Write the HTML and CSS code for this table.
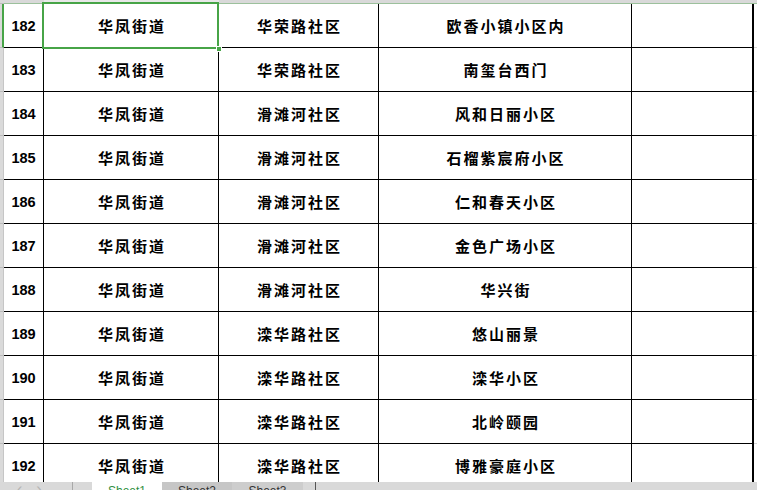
FILE: index.html
```html
<!DOCTYPE html>
<html lang="zh">
<head>
<meta charset="utf-8">
<link rel="stylesheet" href="styles.css">
</head>
<body>
<div class="sheet">
  <div class="colhead">
    <div class="hc corner"></div>
    <div class="hc"></div>
    <div class="hc sel"></div>
    <div class="hc"></div>
    <div class="hc"></div>
    <div class="hc"></div>
    <div class="hc"></div>
  </div>
  <div class="rows">
    <div class="row active"><div class="rh"></div><div class="c num">182</div><div class="c">华凤街道</div><div class="c">华荣路社区</div><div class="c">欧香小镇小区内</div><div class="c e"></div><div class="c f"></div></div>
    <div class="row"><div class="rh"></div><div class="c num">183</div><div class="c">华凤街道</div><div class="c">华荣路社区</div><div class="c">南玺台西门</div><div class="c e"></div><div class="c f"></div></div>
    <div class="row"><div class="rh"></div><div class="c num">184</div><div class="c">华凤街道</div><div class="c">滑滩河社区</div><div class="c">风和日丽小区</div><div class="c e"></div><div class="c f"></div></div>
    <div class="row"><div class="rh"></div><div class="c num">185</div><div class="c">华凤街道</div><div class="c">滑滩河社区</div><div class="c">石榴紫宸府小区</div><div class="c e"></div><div class="c f"></div></div>
    <div class="row"><div class="rh"></div><div class="c num">186</div><div class="c">华凤街道</div><div class="c">滑滩河社区</div><div class="c">仁和春天小区</div><div class="c e"></div><div class="c f"></div></div>
    <div class="row"><div class="rh"></div><div class="c num">187</div><div class="c">华凤街道</div><div class="c">滑滩河社区</div><div class="c">金色广场小区</div><div class="c e"></div><div class="c f"></div></div>
    <div class="row"><div class="rh"></div><div class="c num">188</div><div class="c">华凤街道</div><div class="c">滑滩河社区</div><div class="c">华兴街</div><div class="c e"></div><div class="c f"></div></div>
    <div class="row"><div class="rh"></div><div class="c num">189</div><div class="c">华凤街道</div><div class="c">滦华路社区</div><div class="c">悠山丽景</div><div class="c e"></div><div class="c f"></div></div>
    <div class="row"><div class="rh"></div><div class="c num">190</div><div class="c">华凤街道</div><div class="c">滦华路社区</div><div class="c">滦华小区</div><div class="c e"></div><div class="c f"></div></div>
    <div class="row"><div class="rh"></div><div class="c num">191</div><div class="c">华凤街道</div><div class="c">滦华路社区</div><div class="c">北岭颐园</div><div class="c e"></div><div class="c f"></div></div>
    <div class="row"><div class="rh"></div><div class="c num">192</div><div class="c">华凤街道</div><div class="c">滦华路社区</div><div class="c">博雅豪庭小区</div><div class="c e"></div><div class="c f"></div></div>
  </div>
  <div class="tabbar">
    <div class="nav"><span>‹</span><span>›</span></div>
    <div class="tab active">Sheet1</div>
    <div class="tab t2">Sheet2</div>
    <div class="tab t3">Sheet3</div>
    <div class="tabsep"></div>
  </div>
  <div class="selection"><div class="handle"></div></div>
</div>
</body>
</html>
```

FILE: styles.css
```css
* { box-sizing: border-box; }
html, body { margin: 0; padding: 0; background: #fff; }
body { width: 757px; height: 490px; overflow: hidden; }

.sheet {
  position: relative;
  width: 757px;
  height: 490px;
  display: flex;
  flex-direction: column;
  overflow: hidden;
}

.colhead, .row {
  display: grid;
  grid-template-columns: 4px 40px 175px 160px 253px 122px 1fr;
}

.colhead { height: 4px; flex: none; }
.hc { background: #d9d9d9; border-bottom: 1px solid #9cc09c; }
.hc.corner { border-bottom-color: #bdbdbd; }
.hc.sel { background: #e8e8e8; border-bottom-color: #47a447; }

.rows { height: 478px; flex: none; overflow: hidden; }

.row { height: 44px; }

.rh {
  background: #dadada;
  border-bottom: 1px solid #bcbcbc;
  border-right: 1px solid #c6c6c6;
}
.row.active .rh { border-right: 2px solid #47a447; }

.c {
  border-right: 1px solid #000;
  border-bottom: 1px solid #000;
  display: flex;
  align-items: center;
  justify-content: center;
  font-family: "Noto Sans CJK SC", "Noto Sans", sans-serif;
  font-weight: 700;
  font-size: 15px;
  letter-spacing: 2px;
  padding-left: 2px;
  color: #000;
}
.c.num {
  font-family: "Liberation Sans", Arial, sans-serif;
  font-size: 14.5px;
  letter-spacing: 0;
  padding-left: 0;
  padding-top: 1px;
}
.c.e { border-right-width: 2px; }
.c.f { border-right: none; border-bottom: 1px solid #d4d4d4; background: #fff; }

.tabbar {
  height: 8px;
  flex: none;
  background: #d9d9d9;
  display: flex;
  overflow: hidden;
  font-family: "Liberation Sans", Arial, sans-serif;
  font-size: 12px;
}
.nav {
  width: 73px;
  border-right: 1px solid #a8a8a8;
  display: flex;
  gap: 14px;
  padding-left: 17px;
  color: #b4b4b4;
  font-size: 16px;
  line-height: 14px;
  margin-right: 19px;
}
.tab {
  width: 70px;
  padding-top: 1px;
  line-height: 16px;
  text-align: center;
  color: #333;
}
.tab.active { background: #fff; color: #2f8f3f; }
.tab.t2 { background: #c6c6c6; }
.tab.t3 { background: #cdcdcd; width: 71px; }
.tabsep { width: 1px; background: #555; margin-left: 12px; }

.selection {
  position: absolute;
  left: 42px;
  top: 2px;
  width: 177px;
  height: 47px;
  border: 2px solid #47a447;
  pointer-events: none;
}
.handle {
  position: absolute;
  right: -5px;
  bottom: -5px;
  width: 6px;
  height: 6px;
  background: #47a447;
  border: 1px solid #fff;
}
```
